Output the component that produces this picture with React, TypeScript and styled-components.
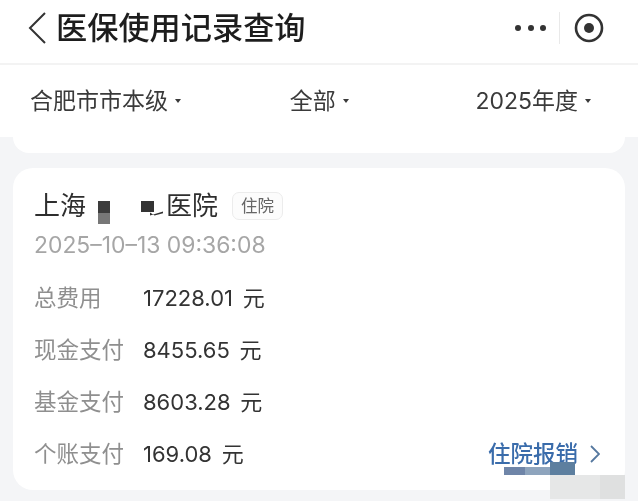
import styled, { createGlobalStyle } from 'styled-components';

const GlobalStyle = createGlobalStyle`
    html, body {
        margin: 0;
        padding: 0;
        background: #f4f5f7;
    }
    body {
        font-family: Inter, "Noto Sans CJK SC", sans-serif;
        color: #333;
    }
`;

const Page = styled.div`
    position: relative;
    width: 638px;
    height: 501px;
    overflow: hidden;
    background: #f4f5f7;
    filter: blur(0.45px);
`;

const Header = styled.header`
    height: 55px;
    background: #fff;
    border-bottom: 2px solid #f3f3f3;
    display: flex;
    align-items: center;
    padding: 0 34px 8px 27px;
    box-sizing: content-box;
`;

const BackIcon = styled.svg`
    width: 20px;
    height: 32px;
    margin-right: 9px;
    flex-shrink: 0;
`;

const Title = styled.h1`
    margin: 0;
    flex: 1;
    font-size: 31.2px;
    line-height: 40px;
    font-weight: 500;
    color: #1d1d1d;
    white-space: nowrap;
`;

const MenuDots = styled.div`
    display: flex;
    gap: 6.5px;
    margin-right: 13px;
`;

const Dot = styled.span`
    width: 6px;
    height: 6px;
    border-radius: 50%;
    background: #333;
`;

const Divider = styled.span`
    width: 1px;
    height: 32px;
    background: #e9e9e9;
    margin-right: 14px;
`;

const TargetIcon = styled.svg`
    width: 30px;
    height: 30px;
`;

const FilterBar = styled.div`
    height: 72px;
    background: #fff;
    display: flex;
    align-items: center;
    justify-content: space-between;
    padding: 0 47px 0 30px;
`;

const Filter = styled.div<{ $shift?: number }>`
    display: flex;
    align-items: center;
    gap: 7px;
    margin-right: ${p => p.$shift || 0}px;
    font-size: 23px;
    line-height: 30px;
    color: #3a3a3a;
    white-space: nowrap;
`;

const Caret = styled.span`
    width: 0;
    height: 0;
    border-left: 3.5px solid transparent;
    border-right: 3.5px solid transparent;
    border-top: 4px solid #3a3a3a;
`;

const SheetEnd = styled.div`
    height: 16px;
    margin: 0 13px;
    background: #fff;
    border-radius: 0 0 20px 20px;
`;

const Card = styled.section`
    margin: 15px 13px 0;
    height: 322px;
    box-sizing: border-box;
    padding: 22px 25px 0 21px;
    background: #fff;
    border-radius: 20px;
    display: flex;
    flex-direction: column;
`;

const CardTitle = styled.div`
    display: flex;
    align-items: center;
    height: 32px;
    font-size: 26px;
    line-height: 32px;
    color: #2e2e2e;
    white-space: nowrap;
`;

const RedactTall = styled.span`
    width: 12px;
    height: 23px;
    margin: 12px 31px 0 12px;
    background: linear-gradient(#3c3c3c 0 50%, #777 50% 100%);
`;

const RedactSmall = styled.span`
    position: relative;
    width: 13px;
    height: 11px;
    margin: 0 12px 0 0;
    background: #333;
    &::after {
        content: '';
        position: absolute;
        left: 9px;
        top: 10px;
        width: 13px;
        height: 5px;
        background: #333;
        clip-path: polygon(0 100%, 100% 20%, 100% 55%, 35% 100%, 0 40%);
    }
`;

const Tag = styled.span`
    margin-left: 14px;
    width: 51px;
    height: 28px;
    box-sizing: border-box;
    display: flex;
    align-items: center;
    justify-content: center;
    border: 1px solid #ececec;
    border-radius: 7px;
    background: #fcfcfc;
    font-size: 16.5px;
    color: #666;
`;

const DateText = styled.div`
    margin-top: 8px;
    font-size: 22.9px;
    line-height: 30px;
    color: #a6a6a6;
    white-space: nowrap;
`;

const Rows = styled.div`
    margin-top: 23px;
    display: flex;
    flex-direction: column;
    gap: 22px;
`;

const Row = styled.div`
    display: flex;
    align-items: center;
    height: 30px;
    font-size: 22.5px;
    line-height: 30px;
    white-space: nowrap;
`;

const Label = styled.span`
    width: 109px;
    color: #8f8f8f;
`;

const Amount = styled.span`
    flex: 1;
    font-size: 22px;
    word-spacing: 3.5px;
    color: #333;
`;

const ClaimLink = styled.a`
    display: flex;
    align-items: center;
    gap: 12px;
    color: #3a6cab;
    font-size: 22.5px;
    font-weight: 500;
`;

const Mosaic = styled.div<{ $x: number; $y: number; $w: number; $h: number; $c: string }>`
    position: absolute;
    left: ${p => p.$x}px;
    top: ${p => p.$y}px;
    width: ${p => p.$w}px;
    height: ${p => p.$h}px;
    background: ${p => p.$c};
`;

const rows = [
    { label: '总费用', amount: '17228.01 元' },
    { label: '现金支付', amount: '8455.65 元' },
    { label: '基金支付', amount: '8603.28 元' },
    { label: '个账支付', amount: '169.08 元' }
];

const App = () => {
    return (
        <Page>
            <GlobalStyle />
            <Header>
                <BackIcon viewBox="0 0 20 32" fill="none" stroke="#333" strokeWidth="2">
                    <path d="M18 1 L3 16 L18 31" />
                </BackIcon>
                <Title>医保使用记录查询</Title>
                <MenuDots>
                    <Dot />
                    <Dot />
                    <Dot />
                </MenuDots>
                <Divider />
                <TargetIcon viewBox="0 0 30 30">
                    <circle cx="15" cy="15" r="13" fill="none" stroke="#333" strokeWidth="2.6" />
                    <circle cx="15" cy="15" r="5" fill="#333" />
                </TargetIcon>
            </Header>
            <FilterBar>
                <Filter>合肥市市本级<Caret /></Filter>
                <Filter $shift={18}>全部<Caret /></Filter>
                <Filter>2025年度<Caret /></Filter>
            </FilterBar>
            <SheetEnd />
            <Card>
                <CardTitle>
                    上海
                    <RedactTall />
                    <RedactSmall />
                    医院
                    <Tag>住院</Tag>
                </CardTitle>
                <DateText>2025–10–13 09:36:08</DateText>
                <Rows>
                    {rows.map((row, i) => (
                        <Row key={row.label}>
                            <Label>{row.label}</Label>
                            <Amount>{row.amount}</Amount>
                            {i === rows.length - 1 && (
                                <ClaimLink>
                                    住院报销
                                    <svg width="10" height="18" viewBox="0 0 10 18" fill="none" stroke="#55789f" strokeWidth="1.8">
                                        <path d="M1 1 L9 9 L1 17" />
                                    </svg>
                                </ClaimLink>
                            )}
                        </Row>
                    ))}
                </Rows>
            </Card>
            <Mosaic $x={504} $y={467} $w={22} $h={8} $c="#6f85a8" />
            <Mosaic $x={525} $y={467} $w={26} $h={8} $c="#8ea4bd" />
            <Mosaic $x={550} $y={462} $w={25} $h={13} $c="#5d7f9f" />
            <Mosaic $x={550} $y={475} $w={50} $h={24} $c="#e6e7e7" />
            <Mosaic $x={600} $y={475} $w={25} $h={24} $c="#dfe0e0" />
        </Page>
    );
};

export default App;
